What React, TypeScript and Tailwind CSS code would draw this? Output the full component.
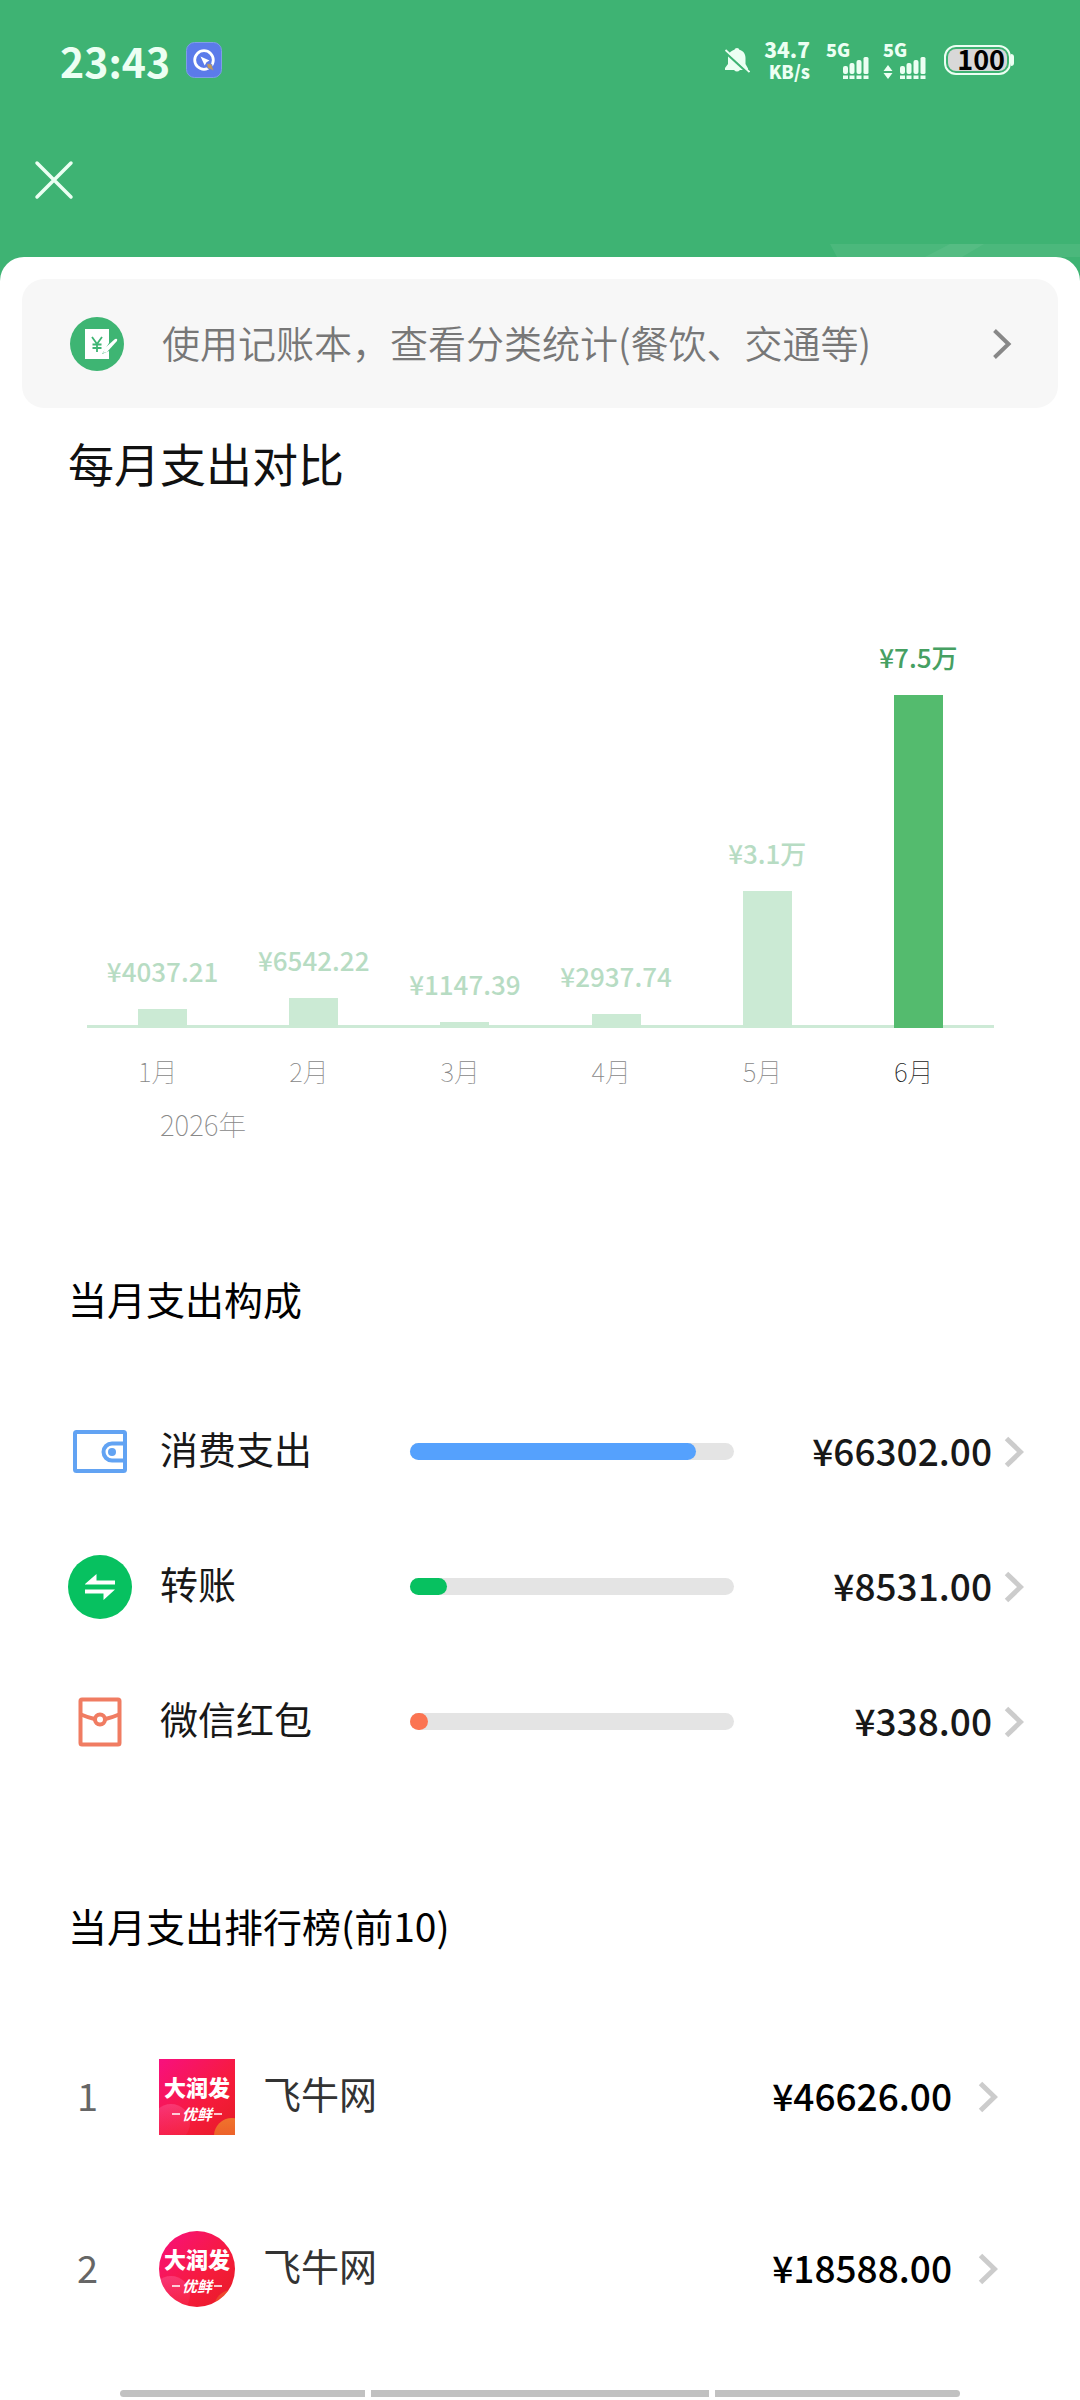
import React from 'react';
import type { ReactNode } from 'react';

interface MonthBar {
  month: string;
  label: string;
  height: number;
  active?: boolean;
}

interface Category {
  name: string;
  amount: string;
  percent: number;
  barClass: string;
  icon: ReactNode;
}

interface Merchant {
  name: string;
  amount: string;
  round: boolean;
}

const months: MonthBar[] = [
  { month: '1月', label: '¥4037.21', height: 19 },
  { month: '2月', label: '¥6542.22', height: 30 },
  { month: '3月', label: '¥1147.39', height: 6 },
  { month: '4月', label: '¥2937.74', height: 14 },
  { month: '5月', label: '¥3.1万', height: 137 },
  { month: '6月', label: '¥7.5万', height: 333, active: true },
];

const categories: Category[] = [
  { name: '消费支出', amount: '¥66302.00', percent: 88.2, barClass: 'bg-[#55a1fd]', icon: <WalletIcon /> },
  { name: '转账', amount: '¥8531.00', percent: 11.4, barClass: 'bg-[#07c160]', icon: <TransferIcon /> },
  { name: '微信红包', amount: '¥338.00', percent: 0.4, barClass: 'bg-[#fb7452]', icon: <RedPacketIcon /> },
];

const merchants: Merchant[] = [
  { name: '飞牛网', amount: '¥46626.00', round: false },
  { name: '飞牛网', amount: '¥18588.00', round: true },
];

function WalletIcon() {
  return (
    <svg viewBox="0 0 64 64" className="size-16" fill="none" stroke="#62a3f3" strokeWidth="4" aria-hidden="true">
      <rect x="7" y="12" width="50" height="39" rx="1.5" />
      <path d="M56 23.5H44a8.500 8.500 0 0 0 0 17H56" />
      <circle cx="44" cy="32" r="4" fill="#62a3f3" stroke="none" />
    </svg>
  );
}

function TransferIcon() {
  return (
    <svg viewBox="0 0 64 64" className="size-16" aria-hidden="true">
      <circle cx="32" cy="32" r="32" fill="#07c160" />
      <path d="M17 29L28.500 19V25.500H47V29.500H17ZM47 34.500L35.500 45V38.500H17v-4Z" fill="#fff" />
    </svg>
  );
}

function RedPacketIcon() {
  return (
    <svg viewBox="0 0 64 64" className="size-16" fill="none" stroke="#f07c62" strokeWidth="4" aria-hidden="true">
      <rect x="12.500" y="9.500" width="39" height="45" rx="1.500" />
      <path d="M13 24.500Q20 27.500 26.500 29M51 24.500Q44 27.500 37.500 29" />
      <circle cx="32" cy="29.500" r="5" />
    </svg>
  );
}

function LedgerIcon() {
  return (
    <svg viewBox="0 0 54 54" className="size-[54px]" aria-hidden="true">
      <circle cx="27" cy="27" r="27" fill="#3eb573" />
      <path d="M15 12h24v14l-7 11 7-3v8H15Z" fill="#fff" />
      <path d="M33 36l2-5L45 22q3-1 2 2L37 35Z" fill="#fff" />
      <path d="M22 20l5 7 5-7M27 27v8M22.500 27.500h9M22.500 31h9" fill="none" stroke="#3eb573" strokeWidth="1.800" />
    </svg>
  );
}

function Chevron({ className }: { className: string }) {
  return (
    <svg viewBox="0 0 20 32" className={className} fill="none" stroke="currentColor" aria-hidden="true">
      <path d="M2.500 2.500L16.500 16L2.500 29.500" />
    </svg>
  );
}

function MerchantLogo({ round }: { round: boolean }) {
  const id = round ? 'logo-round' : 'logo-square';
  return (
    <svg viewBox="0 0 76 76" className={round ? 'size-[76px] rounded-full' : 'size-[76px]'} role="img" aria-label="大润发优鲜">
      <defs>
        <linearGradient id={id} x1="0" y1="0" x2="1" y2="1">
          <stop offset="0" stopColor="#f8107f" />
          <stop offset="0.6" stopColor="#f61b3c" />
          <stop offset="1" stopColor="#e51c25" />
        </linearGradient>
        <linearGradient id={`${id}-left`} x1="0" y1="0" x2="0" y2="1">
          <stop offset="0" stopColor="#fb5f9a" stopOpacity="0.450" />
          <stop offset="1" stopColor="#f3305c" stopOpacity="0.200" />
        </linearGradient>
        <linearGradient id={`${id}-right`} x1="0" y1="0" x2="0" y2="1">
          <stop offset="0" stopColor="#f0782c" />
          <stop offset="1" stopColor="#ea5228" />
        </linearGradient>
      </defs>
      <rect width="76" height="76" fill={`url(#${id})`} />
      <circle cx="12" cy="64" r="19" fill={`url(#${id}-left)`} />
      <circle cx="73" cy="77" r="18" fill={`url(#${id}-right)`} fillOpacity={round ? 0.5 : 0.95} />
      <text x="38" y="37" fontSize="22" fontWeight="900" textAnchor="middle" fill="#fff">大润发</text>
      <text x="38" y="61" fontSize="15" fontWeight="700" fontStyle="italic" textAnchor="middle" fill="#fff">优鲜</text>
      <path d="M13 55h8M55 55h8" stroke="#fff" strokeWidth="1.300" />
    </svg>
  );
}

function Signal() {
  return (
    <svg viewBox="0 0 26 22" className="h-[22px] w-[26px]" fill="currentColor" aria-hidden="true">
      <rect x="0" y="9" width="5" height="8" rx="2" />
      <rect x="6.500" y="6" width="5" height="11" rx="2" />
      <rect x="13.500" y="3" width="5" height="14" rx="2" />
      <rect x="20.500" y="0" width="5" height="17" rx="1.500" />
      <path d="M0 18.500h5v3.500H0zM6.500 18.500h5v3.500h-5zM13.500 18.500h5v3.500h-5zM20.500 18.500h5v3.500h-5z" />
    </svg>
  );
}

function StatusBar() {
  return (
    <div className="flex h-[120px] items-center pr-[66px] pl-[60px] text-[#ecfff3]">
      <span className="text-[41px] leading-[60px] font-bold">23:43</span>
      <svg viewBox="0 0 36 36" className="ml-4 size-9" aria-hidden="true">
        <rect x="0.500" y="0.500" width="35" height="35" rx="8" fill="#5b7bea" stroke="#7f9ee6" />
        <circle cx="18" cy="18" r="9.300" fill="none" stroke="#fff" strokeWidth="2.800" />
        <path d="M14.500 14.500l9 4-3 1.800-1.800 3.200z" fill="#fff" />
        <path d="M20.500 21.500l5 .5 2.500 7-6.500-3z" fill="#c2995c" stroke="#5b7bea" strokeWidth="0.800" />
      </svg>
      <div className="ml-auto flex items-center">
        <svg viewBox="0 0 26 26" className="size-[26px]" aria-hidden="true">
          <path d="M13 1c1.500 0 2 .8 2.300 1.800C19.500 4 21.500 7 21.500 11v6l2.500 4.500V23H16q-3 3-6 0H1v-2l3-4v-6c0-4 2.500-7 6.500-8.200C10.800 1.800 11.500 1 13 1Z" fill="currentColor" />
          <path d="M0 4l24 22" stroke="#3eb373" strokeWidth="2.500" />
          <path d="M1.500 3l24 22" stroke="currentColor" strokeWidth="1.800" />
        </svg>
        <div className="ml-3 w-[48px] text-right font-black">
          <div className="text-[21px] leading-[22px]">34.7</div>
          <div className="text-[18px] leading-[22px]">KB/s</div>
        </div>
        <div className="ml-4 flex w-[43px] flex-col">
          <span className="text-[18px] leading-4 font-black">5G</span>
          <span className="flex justify-end"><Signal /></span>
        </div>
        <div className="ml-3.5 flex w-[43px] flex-col">
          <span className="text-[18px] leading-4 font-black">5G</span>
          <span className="flex items-end justify-between">
            <svg viewBox="0 0 10 14" className="h-3.5 w-2.5" fill="currentColor" aria-hidden="true">
              <path d="M5 0l4.500 6h-9zM5 14l4.500-6h-9z" />
            </svg>
            <Signal />
          </span>
        </div>
        <div className="ml-[18px] flex items-center">
          <div className="flex h-[30px] w-[67px] rounded-[12px] border-2 border-current p-0.5">
            <div className="flex flex-1 items-center justify-end rounded-[8px] bg-[#d8d8d8] pr-0.5 pb-0.5 text-[27px] leading-5 font-bold text-black">100</div>
          </div>
          <div className="h-3 w-[3px] rounded-r bg-current" />
        </div>
      </div>
    </div>
  );
}

function MonthlyChart() {
  return (
    <figure className="pr-[86px] pl-[87px]">
      <div className="grid h-[531px] grid-cols-6 items-end shadow-[inset_0_-3px_0_#cdead6]">
        {months.map((m) => (
          <div key={m.month} className="flex flex-col items-center">
            <span className={m.active ? 'mb-[18px] text-[26px] leading-10 font-medium text-[#46a062]' : 'mb-[18px] text-[26px] leading-10 font-medium text-[#b7dcc3]'}>
              {m.label}
            </span>
            <div
              className={m.active ? 'w-[49px] bg-[#54bb6e]' : 'w-[49px] bg-[#cbead4]'}
              style={{ height: m.height }}
            />
          </div>
        ))}
      </div>
      <div className="mt-[23px] grid grid-cols-6">
        {months.map((m) => (
          <div key={m.month} className="flex justify-center">
            <span className={m.active ? 'w-[49px] text-[26px] leading-10 font-thin text-[#222]' : 'w-[49px] text-[26px] leading-10 font-thin text-[#888]'}>
              {m.month}
            </span>
          </div>
        ))}
      </div>
      <figcaption className="mt-[13px] pl-[73px] text-[28px] leading-10 font-thin text-[#888]">2026年</figcaption>
    </figure>
  );
}

export default function App() {
  return (
    <div className="flex min-h-screen flex-col bg-[#3eb373] font-['Noto_Sans_CJK_SC',sans-serif]">
      <header className="relative pb-[17px]">
        <StatusBar />
        <div className="flex h-[120px] items-center px-[34px]">
          <button type="button" aria-label="关闭" className="text-[#ecfff3]">
            <svg viewBox="0 0 40 40" className="size-10" fill="none" stroke="currentColor" strokeWidth="3.500" strokeLinecap="round" aria-hidden="true">
              <path d="M3 3l34 34M37 3L3 37" />
            </svg>
          </button>
        </div>
        {/* faint pattern behind the top edge of the sheet */}
        <svg viewBox="0 0 250 13" className="absolute right-0 bottom-0 h-[13px] w-[250px]" aria-hidden="true">
          <path d="M0 0H250V13H7Z" fill="#fff" fillOpacity="0.070" />
          <path d="M120 0H154L132 13H95Z" fill="#fff" fillOpacity="0.060" />
        </svg>
      </header>

      <main className="flex flex-1 flex-col rounded-t-[24px] bg-white pt-[22px]">
        <a href="#ledger" className="mx-[22px] flex h-[129px] items-center rounded-[22px] bg-[#f7f7f7] pr-[46px] pl-12">
          <LedgerIcon />
          <span className="ml-[38px] flex-1 pb-1 text-[38px] leading-[56px] font-[350] text-[#777]">
            使用记账本，查看分类统计(餐饮、交通等)
          </span>
          <Chevron className="h-8 w-5 stroke-[4] text-[#888]" />
        </a>

        <h1 className="mt-[22px] mb-[3px] px-[68px] text-[46px] leading-[64px] text-[#111]">每月支出对比</h1>
        <MonthlyChart />

        <section>
          <h2 className="mt-[126px] px-[68px] text-[39px] leading-[56px] text-black">当月支出构成</h2>
          <ul className="mt-[58px]">
            {categories.map((c) => (
              <li key={c.name}>
                <button type="button" className="flex h-[135px] w-full items-center pr-14 pl-[68px] text-left text-[#181818]">
                  {c.icon}
                  <span className="ml-7 w-[250px] pb-2 text-[38px] leading-[56px]">{c.name}</span>
                  <span className="flex h-[17px] flex-1 rounded-full bg-[#e4e4e4]">
                    <span className={`${c.barClass} min-w-[18px] rounded-full`} style={{ width: `${c.percent}%` }} />
                  </span>
                  <span className="w-[258px] pb-1 text-right text-[37px] leading-[56px] font-medium">{c.amount}</span>
                  <Chevron className="ml-3 h-8 w-5 stroke-[5] text-[#ccc]" />
                </button>
              </li>
            ))}
          </ul>
        </section>

        <section>
          <h2 className="mt-[108px] px-[68px] text-[39px] leading-[56px] text-black">当月支出排行榜(前10)</h2>
          <ol className="mt-[58px]">
            {merchants.map((m, i) => (
              <li key={m.amount}>
                <button type="button" className="flex h-[172px] w-full items-center pr-[82px] pl-[77px] text-left">
                  <span className="w-[82px] pb-1 text-[38px] leading-[56px] text-[#666]">{i + 1}</span>
                  <MerchantLogo round={m.round} />
                  <span className="ml-7 flex-1 pb-2 text-[38px] leading-[56px] text-[#333]">{m.name}</span>
                  <span className="pb-1 text-[37px] leading-[56px] font-medium text-black">{m.amount}</span>
                  <Chevron className="ml-[26px] h-8 w-5 stroke-[5] text-[#ccc]" />
                </button>
              </li>
            ))}
          </ol>
        </section>

        {/* system gesture bar */}
        <div className="mt-auto mb-[3px] flex h-[7px] gap-1.5 px-[120px]" aria-hidden="true">
          <div className="w-[245px] rounded-l-full bg-[#c1c1c1]" />
          <div className="flex-1 bg-[#c1c1c1]" />
          <div className="w-[245px] rounded-r-full bg-[#c1c1c1]" />
        </div>
      </main>
    </div>
  );
}
